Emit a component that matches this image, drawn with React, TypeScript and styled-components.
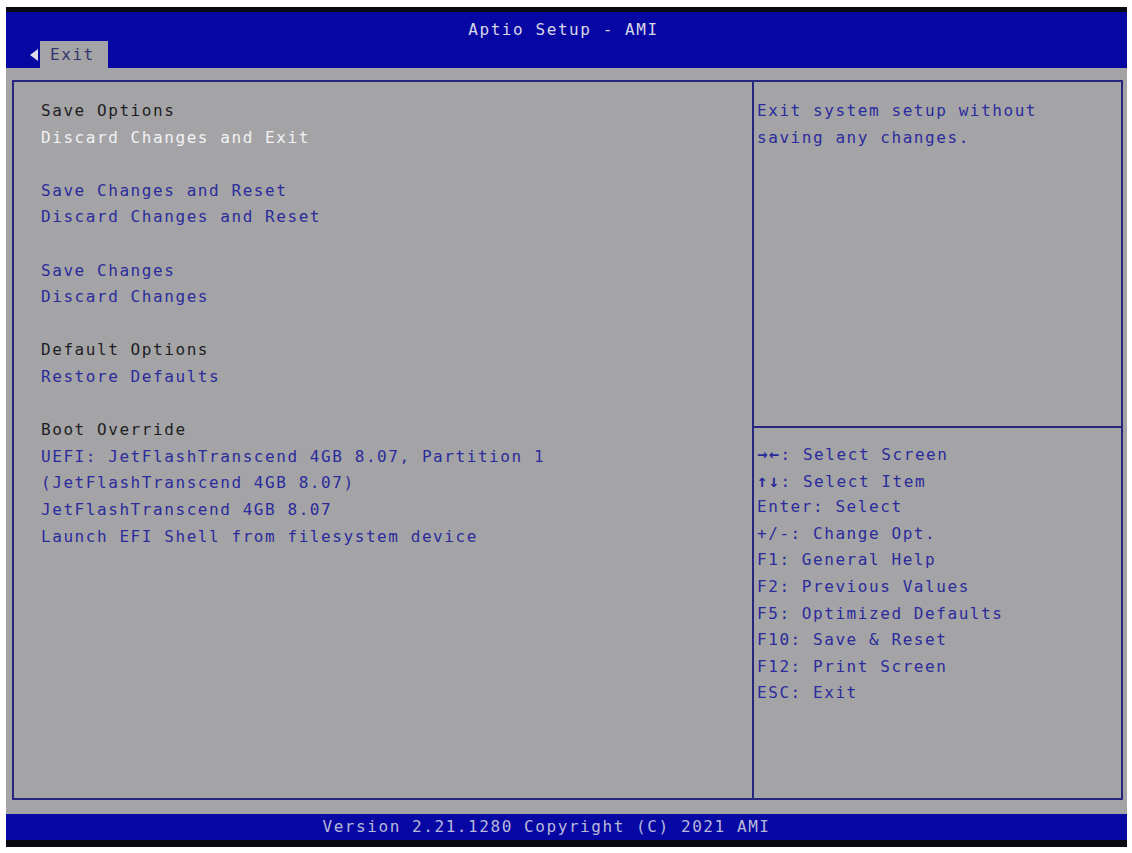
import React from "react";
import styled, { createGlobalStyle } from "styled-components";

const GlobalStyle = createGlobalStyle`
  html, body {
    margin: 0;
    padding: 0;
    background: #ffffff;
  }
  body {
    font-family: "DejaVu Sans Mono", "Liberation Mono", monospace;
  }
`;

const ROW = 26.6;

type Tone = "head" | "item" | "active" | "blank";

interface Line {
  text: string;
  tone: Tone;
}

// left menu, one entry per text row
const menu: Line[] = [
  { text: "Save Options", tone: "head" },
  { text: "Discard Changes and Exit", tone: "active" },
  { text: "", tone: "blank" },
  { text: "Save Changes and Reset", tone: "item" },
  { text: "Discard Changes and Reset", tone: "item" },
  { text: "", tone: "blank" },
  { text: "Save Changes", tone: "item" },
  { text: "Discard Changes", tone: "item" },
  { text: "", tone: "blank" },
  { text: "Default Options", tone: "head" },
  { text: "Restore Defaults", tone: "item" },
  { text: "", tone: "blank" },
  { text: "Boot Override", tone: "head" },
  { text: "UEFI: JetFlashTranscend 4GB 8.07, Partition 1", tone: "item" },
  { text: "(JetFlashTranscend 4GB 8.07)", tone: "item" },
  { text: "JetFlashTranscend 4GB 8.07", tone: "item" },
  { text: "Launch EFI Shell from filesystem device", tone: "item" },
];

const keys = [
  "→←: Select Screen",
  "↑↓: Select Item",
  "Enter: Select",
  "+/-: Change Opt.",
  "F1: General Help",
  "F2: Previous Values",
  "F5: Optimized Defaults",
  "F10: Save & Reset",
  "F12: Print Screen",
  "ESC: Exit",
];

const toneColor: Record<Tone, string> = {
  head: "#1e1e24",
  item: "#2b2b9c",
  active: "#f2f2f4",
  blank: "transparent",
};

const App: React.FC = () => {
  return (
    <>
      <GlobalStyle />
      <Screen>
        <Header>
          <Title>Aptio Setup - AMI</Title>
          <Tabs>
            <TabArrow />
            <Tab>Exit</Tab>
          </Tabs>
        </Header>
        <Body>
          <Frame>
            <MenuPane>
              {menu.map((line, i) => (
                <MenuRow key={i} $tone={line.tone}>
                  {line.text || "\u00a0"}
                </MenuRow>
              ))}
            </MenuPane>
            <SidePane>
              <HelpBox>
                <HelpRow>Exit system setup without</HelpRow>
                <HelpRow>saving any changes.</HelpRow>
              </HelpBox>
              <KeyBox>
                {keys.map((k) => (
                  <HelpRow key={k}>
                    {k.startsWith("→") || k.startsWith("↑") ? (
                      <>
                        <Arrows>{k.slice(0, 2)}</Arrows>
                        {k.slice(2)}
                      </>
                    ) : (
                      k
                    )}
                  </HelpRow>
                ))}
              </KeyBox>
            </SidePane>
          </Frame>
        </Body>
        <Footer>Version 2.21.1280 Copyright (C) 2021 AMI</Footer>
      </Screen>
    </>
  );
};

export default App;

const Screen = styled.div`
  margin: 7px 0 0 6px;
  width: 1121px;
  height: 840px;
  display: flex;
  flex-direction: column;
  background: #a4a4a6;
  font-size: 16px;
  letter-spacing: 1.57px;
`;

const Header = styled.div`
  height: 61px;
  flex: none;
  display: flex;
  flex-direction: column;
  justify-content: space-between;
  background: #0707a4;
  border-top: 5px solid #0a0a14;
  box-sizing: border-box;
`;

const Title = styled.div`
  text-align: center;
  color: #d6d6e6;
  padding-top: 6px;
  padding-right: 6px;
  line-height: 23px;
`;

const Tabs = styled.div`
  display: flex;
  align-items: center;
  padding-left: 24px;
`;

const TabArrow = styled.span`
  width: 0;
  height: 0;
  border-top: 6px solid transparent;
  border-bottom: 6px solid transparent;
  border-right: 8px solid #dcdcec;
  margin-right: 2px;
`;

const Tab = styled.div`
  height: 27px;
  line-height: 28px;
  padding: 0 10px;
  width: 48px;
  background: #a4a4a6;
  color: #34346e;
`;

const Body = styled.div`
  flex: 1;
  padding: 12px 4px 14px 6px;
  display: flex;
  box-sizing: border-box;
`;

const Frame = styled.div`
  flex: 1;
  display: grid;
  grid-template-columns: 740px 1fr;
  border: 2px solid #26267e;
  box-sizing: border-box;
`;

const MenuPane = styled.div`
  padding: 16px 0 0 27px;
  border-right: 2px solid #26267e;
`;

const MenuRow = styled.div<{ $tone: Tone }>`
  height: ${ROW}px;
  line-height: ${ROW}px;
  white-space: pre;
  color: ${(p) => toneColor[p.$tone]};
`;

const SidePane = styled.div`
  display: flex;
  flex-direction: column;
`;

const HelpBox = styled.div`
  height: 346px;
  padding: 16px 0 0 3px;
  box-sizing: border-box;
  border-bottom: 2px solid #26267e;
`;

const KeyBox = styled.div`
  padding: 13px 0 0 3px;
`;

const HelpRow = styled.div`
  height: ${ROW}px;
  line-height: ${ROW}px;
  white-space: pre;
  color: #2b2b9c;
`;

const Arrows = styled.span`
  font-weight: bold;
  letter-spacing: 1.5px;
  font-size: 17px;
`;

const Footer = styled.div`
  height: 33px;
  flex: none;
  box-sizing: border-box;
  background: #0707a4;
  border-bottom: 7px solid #0a0a14;
  color: #b8b8d8;
  text-align: center;
  padding-right: 40px;
  line-height: 26px;
`;
